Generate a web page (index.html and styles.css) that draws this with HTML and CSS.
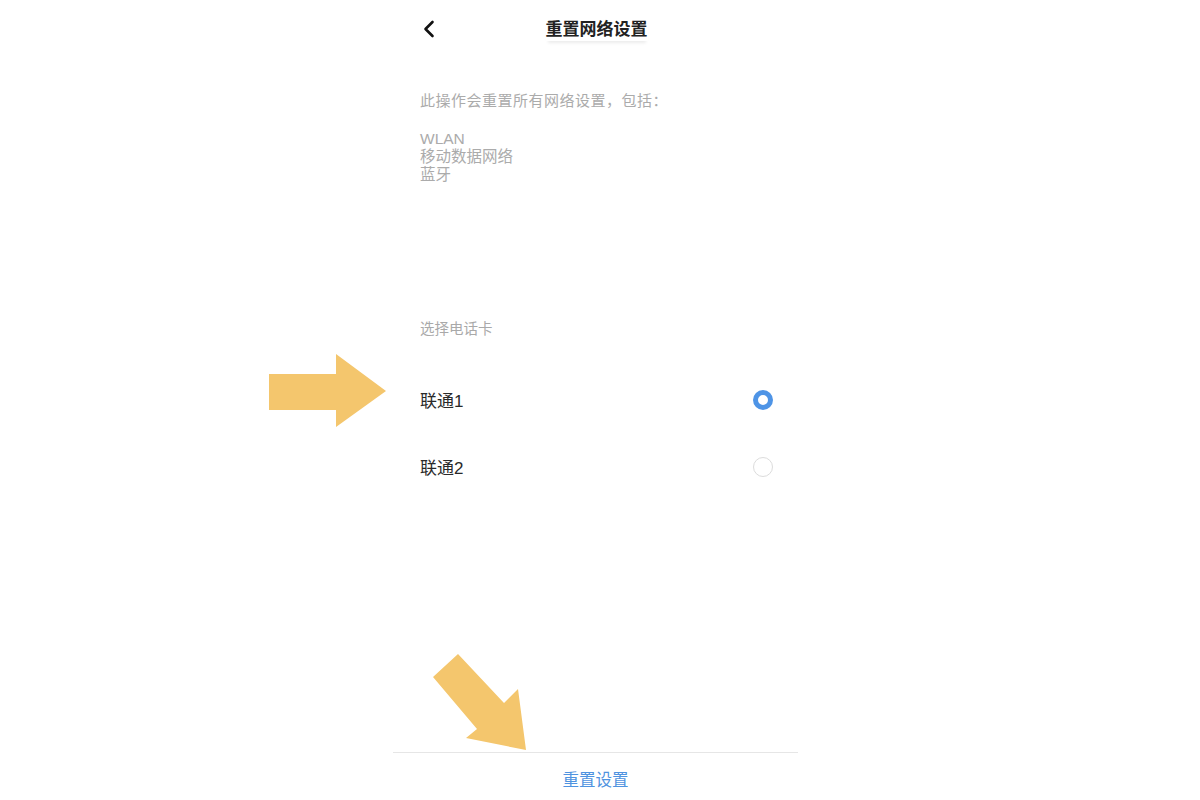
FILE: index.html
```html
<!DOCTYPE html>
<html lang="zh-CN">
<head>
<meta charset="utf-8">
<title>重置网络设置</title>
<link rel="stylesheet" href="styles.css">
</head>
<body>
<div class="screen">
  <header class="header">
    <svg class="back" width="14" height="18" viewBox="0 0 14 18"><path d="M10.5 2 L3.5 9 L10.5 16" fill="none" stroke="#111" stroke-width="2.6" stroke-linecap="round" stroke-linejoin="round"/></svg>
    <h1 class="title">重置网络设置</h1>
    <span></span>
  </header>
  <p class="desc">此操作会重置所有网络设置，包括：</p>
  <ul class="items">
    <li>WLAN</li>
    <li>移动数据网络</li>
    <li>蓝牙</li>
  </ul>
  <div class="label">选择电话卡</div>
  <div class="row"><span class="name">联通1</span><span class="radio on"></span></div>
  <div class="row"><span class="name">联通2</span><span class="radio"></span></div>
  <div class="spacer"></div>
  <footer class="footer">重置设置</footer>
</div>
<svg class="arrows" width="1200" height="800" viewBox="0 0 1200 800">
  <polygon fill="#f4c66d" points="269,374 336,374 336,354 386,391 336,427 336,410 269,410"/>
  <polygon fill="#f4c66d" points="433,677 458,654 504,703 518,689 526,750 466,738 477,729"/>
</svg>
</body>
</html>
```
FILE: styles.css
```css
html, body {
  margin: 0;
  padding: 0;
  background: #fff;
}
body {
  font-family: "Liberation Sans", "Noto Sans CJK SC", sans-serif;
  position: relative;
  width: 1200px;
  height: 800px;
  overflow: hidden;
}
.screen {
  width: 405px;
  margin-left: 393px;
  height: 800px;
  display: flex;
  flex-direction: column;
}
.header {
  height: 60px;
  box-sizing: border-box;
  padding: 0 27px 0 29px;
  display: grid;
  grid-template-columns: 1fr auto 1fr;
  align-items: center;
}
.back {
  display: block;
  margin-top: -2px;
}
.title {
  margin: 0;
  font-size: 17px;
  font-weight: 700;
  color: #222;
  line-height: 22px;
  box-shadow: 0 4px 3px -2px rgba(0,0,0,0.08);
}
.desc {
  margin: 31px 0 0;
  padding-left: 27px;
  font-size: 15px;
  line-height: 20px;
  letter-spacing: 0.5px;
  color: #ababab;
}
.items {
  list-style: none;
  margin: 19px 0 0;
  padding: 0 0 0 27px;
  font-size: 15.5px;
  line-height: 18px;
  color: #ababab;
}
.label {
  margin-top: 135px;
  padding-left: 27px;
  font-size: 14.5px;
  line-height: 20px;
  color: #a9a9a9;
}
.row {
  height: 67px;
  display: flex;
  align-items: center;
  justify-content: space-between;
  padding: 0 25px 0 27px;
}
.label + .row {
  margin-top: 27px;
}
.name {
  font-size: 17px;
  color: #2a2a2a;
}
.radio {
  width: 20px;
  height: 20px;
  box-sizing: border-box;
  border-radius: 50%;
  border: 1.5px solid #dcdcdc;
}
.radio.on {
  border: 5px solid #4e94e6;
}
.spacer {
  flex: 1;
}
.footer {
  height: 48px;
  box-sizing: border-box;
  border-top: 1px solid #e6e6e6;
  padding-top: 17px;
  text-align: center;
  font-size: 16.5px;
  line-height: 20px;
  color: #4f93e0;
}
.arrows {
  position: absolute;
  left: 0;
  top: 0;
  pointer-events: none;
}
```
